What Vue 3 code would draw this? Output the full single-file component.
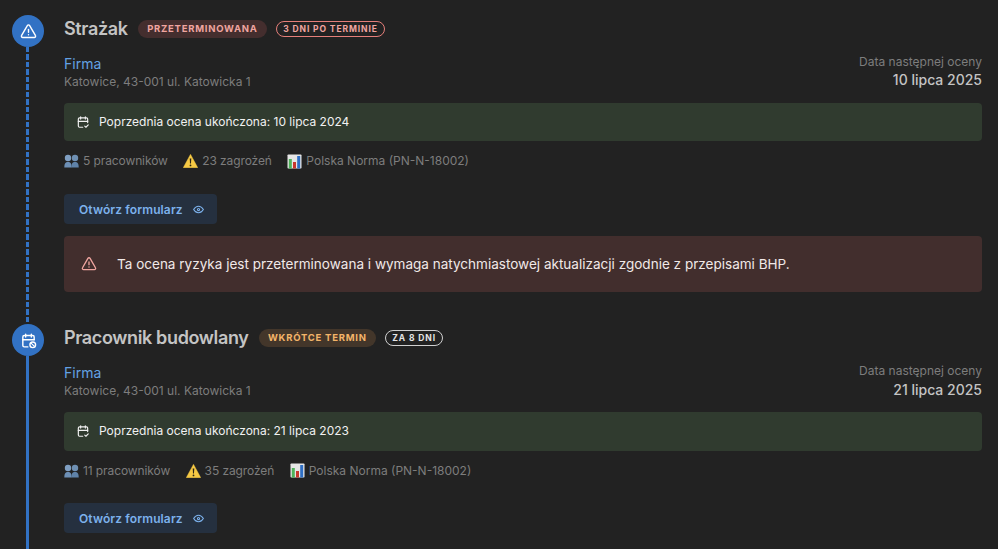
<script setup>
const items = [
  {
    id: 1, icon: 'warn', line: 'dashed', title: 'Strażak', status: 'PRZETERMINOWANA', statusClass: 'red',
    due: '3 DNI PO TERMINIE', dueClass: 'due-red', next: '10 lipca 2025', prev: '10 lipca 2024',
    workers: '5 pracowników', hazards: '23 zagrożeń',
    alert: 'Ta ocena ryzyka jest przeterminowana i wymaga natychmiastowej aktualizacji zgodnie z przepisami BHP.'
  },
  {
    id: 2, icon: 'cal', line: 'solid', title: 'Pracownik budowlany', status: 'WKRÓTCE TERMIN', statusClass: 'amber',
    due: 'ZA 8 DNI', dueClass: 'due-white', next: '21 lipca 2025', prev: '21 lipca 2023',
    workers: '11 pracowników', hazards: '35 zagrożeń', alert: ''
  }
]
</script>

<template>
  <div class="page">
    <section v-for="item in items" :key="item.id" class="item">
      <div class="rail">
        <div class="dot">
          <svg v-if="item.icon === 'warn'" viewBox="0 0 24 24" class="dot-icon" fill="none" stroke="currentColor" stroke-width="2" stroke-linecap="round" stroke-linejoin="round">
            <path d="M12 9v4" /><path d="M10.36 3.6 2.3 17.6A1.9 1.9 0 0 0 3.9 20.5h16.2a1.9 1.9 0 0 0 1.6-2.9L13.64 3.6a1.9 1.9 0 0 0-3.28 0z" /><path d="M12 16.5h.01" />
          </svg>
          <svg v-else viewBox="0 0 24 24" class="dot-icon" fill="none" stroke="currentColor" stroke-width="2" stroke-linecap="round" stroke-linejoin="round">
            <path d="M11 21H6a2 2 0 0 1-2-2V7a2 2 0 0 1 2-2h12a2 2 0 0 1 2 2v4" /><path d="M16 3v4M8 3v4M4 11h16" /><circle cx="18" cy="18" r="4" /><path d="m16 16 4 4" stroke-width="1.6" />
          </svg>
        </div>
        <div class="line" :class="item.line"></div>
      </div>

      <div class="body">
        <header class="head">
          <h2 class="title">{{ item.title }}</h2>
          <span class="status" :class="item.statusClass">{{ item.status }}</span>
          <span class="due" :class="item.dueClass">{{ item.due }}</span>
        </header>

        <div class="info">
          <div>
            <div class="company">Firma</div>
            <div class="address">Katowice, 43-001 ul. Katowicka 1</div>
          </div>
          <div class="next">
            <div class="next-label">Data następnej oceny</div>
            <div class="next-date">{{ item.next }}</div>
          </div>
        </div>

        <div class="prev">
          <svg viewBox="0 0 24 24" class="prev-icon" fill="none" stroke="currentColor" stroke-width="2" stroke-linecap="round" stroke-linejoin="round">
            <path d="M11.5 21H6a2 2 0 0 1-2-2V7a2 2 0 0 1 2-2h12a2 2 0 0 1 2 2v6" /><path d="M16 3v4M8 3v4M4 11h16" /><path d="m15 19 2 2 4-4" />
          </svg>
          <span class="prev-text">Poprzednia ocena ukończona: {{ item.prev }}</span>
        </div>

        <div class="meta">
          <span class="meta-item">
            <svg viewBox="0 0 15 14" class="emoji">
              <circle cx="11" cy="4" r="3.2" fill="#6f90b3" /><path d="M7.4 13.5c0-4 1-5.6 3.6-5.6s3.7 1.6 3.7 5.6z" fill="#5f82a8" />
              <circle cx="4" cy="4" r="3.2" fill="#7f9fc2" /><path d="M.3 13.5c0-4 1.1-5.6 3.7-5.6s3.6 1.6 3.6 5.6z" fill="#6c8fb5" />
            </svg>
            {{ item.workers }}
          </span>
          <span class="meta-item">
            <svg viewBox="0 0 15 14" class="emoji">
              <path d="M7.5 .3.2 13.7h14.6z" fill="#f6c944" stroke="#f6c944" stroke-width=".4" stroke-linejoin="round" /><path d="M6.7 4.6h1.6l-.3 5H7z" fill="#2b2516" /><circle cx="7.5" cy="11.4" r=".9" fill="#2b2516" />
            </svg>
            {{ item.hazards }}
          </span>
          <span class="meta-item">
            <svg viewBox="0 0 15 15" class="emoji chart">
              <rect x=".5" y=".5" width="14" height="14" rx=".8" fill="#e6e6e6" />
              <rect x="1.8" y="5" width="3" height="9.5" fill="#4fb35a" /><rect x="6" y="8" width="3" height="6.5" fill="#c8382e" /><rect x="10.2" y="2" width="3" height="12.5" fill="#2e6ec4" />
            </svg>
            Polska Norma (PN-N-18002)
          </span>
        </div>

        <button class="open" type="button">
          Otwórz formularz
          <svg viewBox="0 0 24 24" class="eye" fill="none" stroke="currentColor" stroke-width="2" stroke-linecap="round" stroke-linejoin="round">
            <path d="M10 12a2 2 0 1 0 4 0 2 2 0 0 0-4 0" /><path d="M21 12c-2.4 4-5.4 6-9 6s-6.6-2-9-6c2.4-4 5.4-6 9-6s6.6 2 9 6" />
          </svg>
        </button>

        <div v-if="item.alert" class="alert">
          <svg viewBox="0 0 24 24" class="alert-icon" fill="none" stroke="currentColor" stroke-width="2" stroke-linecap="round" stroke-linejoin="round">
            <path d="M12 9v4" /><path d="M10.36 3.6 2.3 17.6A1.9 1.9 0 0 0 3.9 20.5h16.2a1.9 1.9 0 0 0 1.6-2.9L13.64 3.6a1.9 1.9 0 0 0-3.28 0z" /><path d="M12 16.5h.01" />
          </svg>
          <span>{{ item.alert }}</span>
        </div>
      </div>
    </section>
  </div>
</template>

<style>
html, body { margin: 0; background: #222222; overflow: hidden; }
</style>

<style scoped>
.page {
  height: 549px;
  overflow: hidden;
  background: #222222;
  font-family: Inter, "Liberation Sans", sans-serif;
  box-sizing: border-box;
  padding: 15px 16px 0 12px;
}
.item { display: flex; height: 309.2px; }
.item:last-child { height: 234px; }
.rail { width: 32px; margin-right: 20px; display: flex; flex-direction: column; align-items: center; flex: none; }
.dot {
  width: 32px; height: 32px; border-radius: 50%; background: #3272c4; color: #fff;
  display: flex; align-items: center; justify-content: center; flex: none;
}
.dot-icon { width: 17px; height: 17px; }
.line { flex: 1; width: 3px; margin-right: 1px; background: #3272c4; }
.line.dashed {
  background: repeating-linear-gradient(to bottom, #3272c4 0, #3272c4 5.5px, transparent 5.5px, transparent 7.5px);
}
.body { flex: 1; min-width: 0; }
.head { display: flex; align-items: center; height: 28px; }
.title { margin: 0; font-size: 18px; line-height: 28px; font-weight: 600; letter-spacing: -.36px; color: #c4c4c4; }
.status {
  margin-left: 10px; height: 18px; line-height: 18px; padding: 0 9.5px; border-radius: 9px;
  font-size: 9.5px; font-weight: 700; letter-spacing: .75px;
}
.status.red { background: #442e2e; color: #f0a5a0; }
.status.amber { background: #43362a; color: #f3b469; }
.due {
  margin-left: 9px; height: 14px; line-height: 14px; padding: 0 6px; border-radius: 8px;
  font-size: 8.5px; font-weight: 700; letter-spacing: .9px; border: 1px solid;
}
.due-red { color: #f0a5a0; border-color: #e57f7a; }
.due-white { color: #e4e4e4; border-color: #d0d0d0; }
.info { display: flex; justify-content: space-between; margin-top: 11px; }
.company { font-size: 14px; line-height: 20px; color: #64a1e3; }
.address { font-size: 12px; line-height: 16px; color: #7d7d7d; }
.next { text-align: right; margin-top: -1px; }
.next-label { font-size: 12px; line-height: 18.4px; color: #7d7d7d; }
.next-date { font-size: 14px; line-height: 18px; font-weight: 500; color: #c4c4c4; }
.prev {
  margin-top: 13px; height: 38.4px; display: flex; align-items: center; gap: 9px; padding-left: 12px;
  background: #303b2f; border-radius: 4px; font-size: 12px; color: #f1f1f1;
}
.prev-icon { width: 14px; height: 14px; }
.prev-text { margin-bottom: 2px; }
.meta { display: flex; gap: 15.5px; margin-top: 11px; font-size: 12px; line-height: 18px; color: #7d7d7d; }
.meta-item { display: flex; align-items: center; gap: 4px; }
.meta-item:not(:last-child) { letter-spacing: -.1px; }
.emoji { width: 15px; height: 14px; flex: none; }
.emoji.chart { height: 15px; }
.open {
  display: flex; align-items: center; gap: 9px; margin-top: 23.8px; height: 30px; padding: 0 12px 0 15px;
  border: 0; border-radius: 4px; background: #25303f; color: #7cb1ec;
  font-family: inherit; font-size: 12px; font-weight: 600; letter-spacing: .12px;
}
.eye { width: 13px; height: 13px; }
.alert {
  margin-top: 12px; height: 56px; display: flex; align-items: center; gap: 20px; padding-left: 17px;
  background: #422e2d; border-radius: 4px; font-size: 13.54px; color: #f1e9e8;
}
.alert-icon { width: 16px; height: 16px; color: #f0a5a0; }
</style>
